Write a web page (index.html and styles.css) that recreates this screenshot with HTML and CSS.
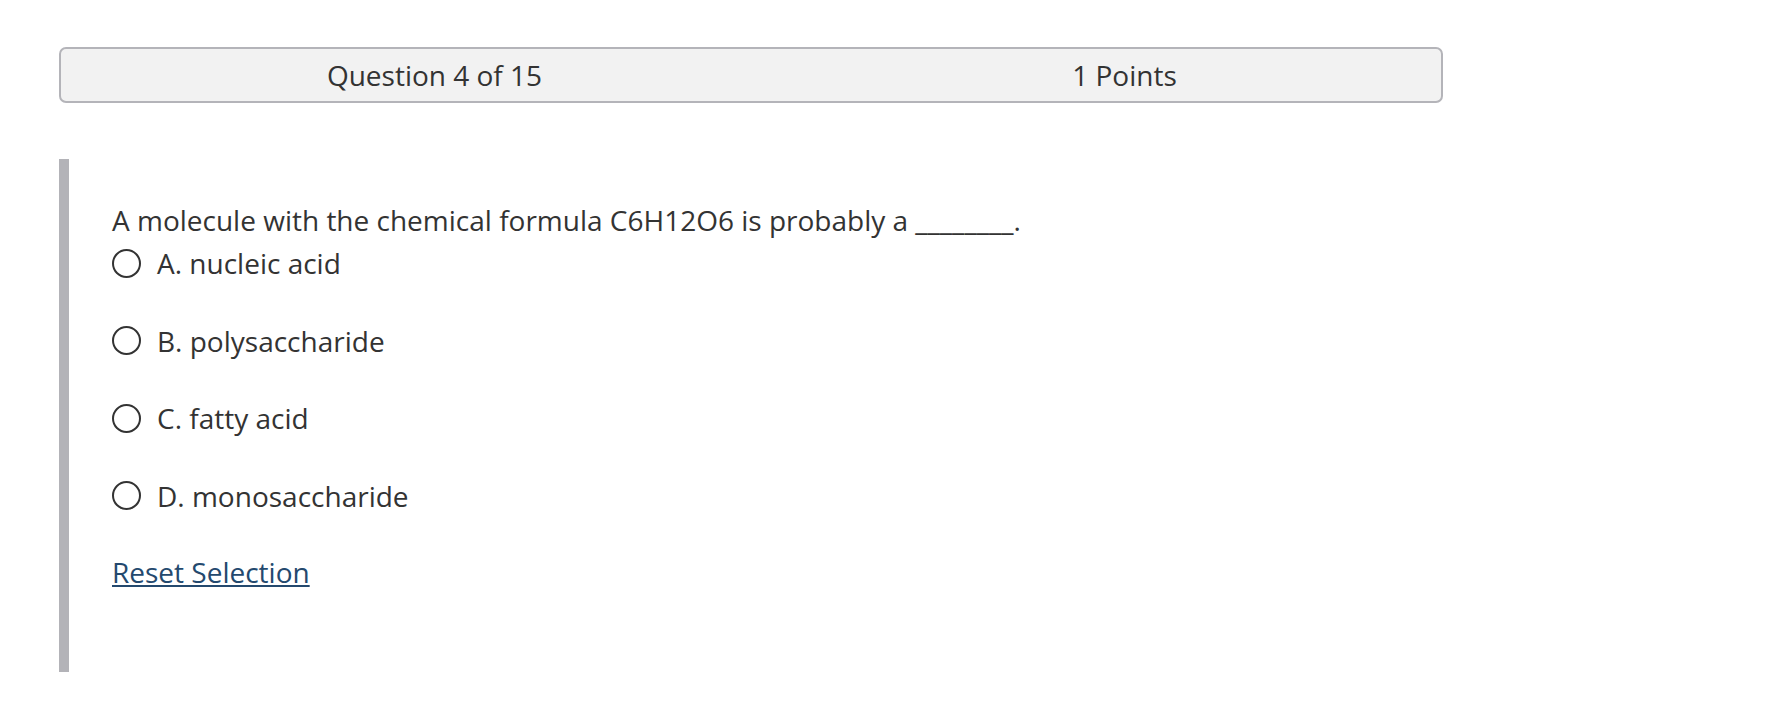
FILE: index.html
```html
<!DOCTYPE html>
<html lang="en">
<head>
    <meta charset="UTF-8">
    <meta name="viewport" content="width=device-width, initial-scale=1.0">
    <title>Question 4 of 15</title>
    <link rel="stylesheet" href="styles.css">
</head>
<body>

    <div class="question-header">
        <div class="question-number">Question 4 of 15</div>
        <div class="question-points">1 Points</div>
    </div>

    <div class="question-body">
        <p class="question-text">A molecule with the chemical formula C6H12O6 is probably a ________.</p>

        <div class="answer-list">
            <label class="answer">
                <input type="radio" name="q4" value="a" class="answer-radio">
                <span>A. nucleic acid</span>
            </label>
            <label class="answer">
                <input type="radio" name="q4" value="b" class="answer-radio">
                <span>B. polysaccharide</span>
            </label>
            <label class="answer">
                <input type="radio" name="q4" value="c" class="answer-radio">
                <span>C. fatty acid</span>
            </label>
            <label class="answer">
                <input type="radio" name="q4" value="d" class="answer-radio">
                <span>D. monosaccharide</span>
            </label>
        </div>

        <a href="#" class="reset-link">Reset Selection</a>
    </div>

</body>
</html>
```

FILE: styles.css
```css
body {
    margin: 0;
    background: #ffffff;
    color: #333333;
    font-family: 'Open Sans', 'Noto Sans', sans-serif;
    font-size: 28px;
}
.question-header {
    display: grid;
    grid-template-columns: 747px 1fr;
    align-items: center;
    box-sizing: border-box;
    width: 1384px;
    height: 56px;
    margin: 47px 0 0 59px;
    background: #f2f2f2;
    border: 2px solid #b4b4b9;
    border-radius: 7px;
    text-align: center;
    line-height: 40px;
}
.question-body {
    margin: 56px 0 0 59px;
    padding: 41px 0 80px 43px;
    border-left: 10px solid #b3b3b8;
    line-height: 40px;
}
.question-text {
    margin: 0;
}
.answer-list {
    margin-top: 3px;
}
.answer {
    display: flex;
    align-items: center;
    gap: 16px;
    margin-bottom: 37.5px;
    cursor: pointer;
}
.answer-radio {
    appearance: none;
    box-sizing: border-box;
    width: 29px;
    height: 29px;
    margin: 0;
    border: 2px solid #333333;
    border-radius: 50%;
    background: #ffffff;
}
.answer-radio:checked {
    background: radial-gradient(circle, #333333 0 6px, #ffffff 7px);
}
.answer:last-child {
    margin-bottom: 36px;
}
.reset-link {
    display: inline-block;
    color: #24496e;
    text-decoration: underline;
}
```
